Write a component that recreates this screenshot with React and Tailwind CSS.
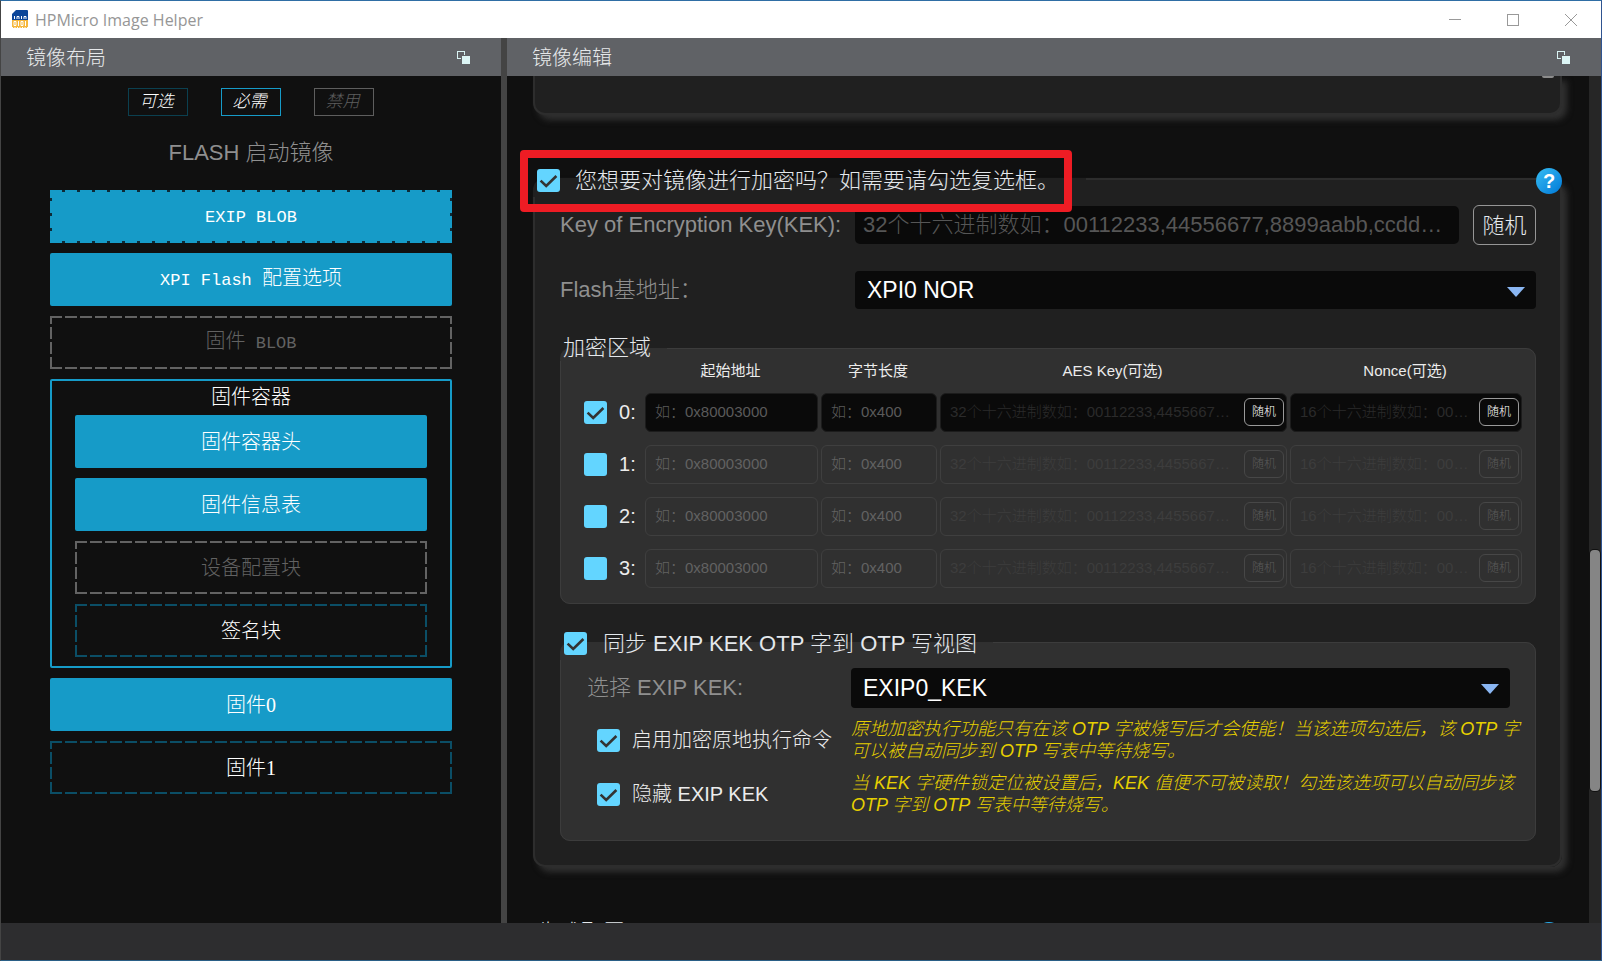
import React from "react";

const DASHED =
  "bg-[image:repeating-linear-gradient(90deg,var(--dash)_0_12px,var(--gap)_12px_15px),repeating-linear-gradient(90deg,var(--dash)_0_12px,var(--gap)_12px_15px),repeating-linear-gradient(0deg,var(--dash)_0_12px,var(--gap)_12px_15px),repeating-linear-gradient(0deg,var(--dash)_0_12px,var(--gap)_12px_15px)] bg-[length:100%_2px,100%_2px,2px_100%,2px_100%] bg-[position:top,bottom,left,right] bg-no-repeat";

const BLOCK_STYLES = {
  dashedFilled: `${DASHED} bg-[#169bc8] text-white [--dash:#169bc8] [--gap:#0e2a36]`,
  filled: "rounded-xs bg-[#169bc8] text-white",
  disabled: `${DASHED} text-[#626262] [--dash:#636363] [--gap:transparent]`,
  optional: `${DASHED} text-white [--dash:#0b4e66] [--gap:transparent]`,
};

function Block({ kind, children }) {
  return (
    <button type="button" className={`h-[53px] w-full text-[20px] leading-6 ${BLOCK_STYLES[kind]}`}>
      {children}
    </button>
  );
}

function Mono({ children }) {
  return <span className="font-['Liberation_Mono',monospace] text-[17px]">{children}</span>;
}

function Digit({ children }) {
  return <span className="font-['Liberation_Serif',serif]">{children}</span>;
}

function DockIcon() {
  return (
    <svg width="13" height="13" viewBox="0 0 13 13" aria-hidden="true">
      <rect x="0.5" y="0.5" width="7" height="7" fill="none" stroke="#d8f3f3" />
      <rect x="4" y="4" width="9" height="9" fill="#606266" />
      <rect x="5" y="5" width="8" height="8" fill="#dcf5f5" />
    </svg>
  );
}

function PanelHeader({ title, className }) {
  return (
    <header className={`flex h-[38px] shrink-0 items-center justify-between bg-[#606266] ${className}`}>
      <h2 className="pt-px text-[20px] leading-6 text-[#e6e8ea]">{title}</h2>
      <button type="button" aria-label="浮动面板">
        <DockIcon />
      </button>
    </header>
  );
}

function CheckBox({ id, label, defaultChecked }) {
  return (
    <span className="grid size-[23px] shrink-0">
      <input
        id={id}
        type="checkbox"
        aria-label={label}
        defaultChecked={defaultChecked}
        className="peer col-start-1 row-start-1 size-[23px] appearance-none rounded-[3px] bg-[#63d5ff]"
      />
      <svg
        viewBox="0 0 23 23"
        className="pointer-events-none invisible col-start-1 row-start-1 size-[23px] peer-checked:visible"
        aria-hidden="true"
      >
        <path d="M3.6 11.6 L9.2 17 L19.4 7" fill="none" stroke="#333" strokeWidth="2.6" />
      </svg>
    </span>
  );
}

function Select({ id, value, className }) {
  return (
    <div className={`relative flex-1 ${className}`}>
      <select
        id={id}
        defaultValue={value}
        className="size-full appearance-none rounded-[4px] bg-[#0a0a0a] pr-10 pl-3 text-[23px] text-white"
      >
        <option>{value}</option>
      </select>
      <svg
        width="18"
        height="10"
        viewBox="0 0 18 10"
        className="pointer-events-none absolute top-4 right-[11px]"
        aria-hidden="true"
      >
        <path d="M0 0 H18 L9 10 Z" fill="#8ab6f2" />
      </svg>
    </div>
  );
}

function HelpButton() {
  return (
    <div className="absolute -top-[29px] -right-[2px]">
      <button
        type="button"
        aria-label="帮助"
        className="flex size-[26px] items-center justify-center rounded-full bg-linear-to-br from-[#35bdf3] to-[#0078d7] text-[20px] leading-none font-bold text-white"
      >
        ?
      </button>
    </div>
  );
}

const CARD =
  "relative mr-[27px] ml-[26px] min-w-0 border-2 border-[#2d2d2d] bg-[#202020] shadow-[5px_5px_6px_#303030]";

function CellField({ row, label, placeholder, active, action }) {
  const frame = active ? "border-[#1c1c1c] bg-[#0a0a0a]" : "border-[#3f3f3f]";
  const button = active ? "border-[#9a9a9a] text-white" : "border-[#474747] text-[#5a5a5a]";
  const hint = action
    ? active
      ? "placeholder:text-[#2b2b2b]"
      : "placeholder:text-[#3d3d3d]"
    : active
      ? "placeholder:text-[#5a5a5a]"
      : "placeholder:text-[#626262]";
  return (
    <div className={`mr-[3px] flex h-[39px] items-center rounded-[6px] border pr-[2px] pl-[9px] ${frame}`}>
      <input
        type="text"
        aria-label={`${label} ${row}`}
        placeholder={placeholder}
        disabled={!active}
        className={`min-w-0 flex-1 text-[15px] text-ellipsis text-white ${hint}`}
      />
      {action && (
        <button
          type="button"
          disabled={!active}
          className={`ml-[9px] h-7 w-10 shrink-0 rounded-[6px] border text-[12px] ${button}`}
        >
          随机
        </button>
      )}
    </div>
  );
}

function RegionTable() {
  return (
    <table className="w-full table-fixed border-collapse">
      <colgroup>
        <col className="w-[71px]" />
        <col className="w-[176px]" />
        <col className="w-[119px]" />
        <col />
        <col className="w-[235px]" />
      </colgroup>
      <thead>
        <tr className="h-[25px] align-top text-[15px] leading-5 text-[#ececec] [&>th]:pr-[5px] [&>th]:font-normal">
          <td />
          <th>起始地址</th>
          <th>字节长度</th>
          <th>AES Key(可选)</th>
          <th>Nonce(可选)</th>
        </tr>
      </thead>
      <tbody>
        {[0, 1, 2, 3].map((n) => {
          const active = n === 0;
          return (
            <tr key={n} className="h-[52px]">
              <td>
                <div className="flex items-center gap-3 pl-[10px]">
                  <CheckBox id={`region-${n}`} defaultChecked={active} />
                  <label htmlFor={`region-${n}`} className="text-[20px] leading-6 text-[#ececec]">
                    {n}:
                  </label>
                </div>
              </td>
              <td>
                <CellField row={n} label="起始地址" placeholder="如：0x80003000" active={active} />
              </td>
              <td>
                <CellField row={n} label="字节长度" placeholder="如：0x400" active={active} />
              </td>
              <td>
                <CellField
                  row={n}
                  label="AES Key"
                  placeholder="32个十六进制数如：00112233,44556677,8899aabb,ccddeeff"
                  active={active}
                  action
                />
              </td>
              <td>
                <CellField
                  row={n}
                  label="Nonce"
                  placeholder="16个十六进制数如：00112233,44556677"
                  active={active}
                  action
                />
              </td>
            </tr>
          );
        })}
      </tbody>
    </table>
  );
}

function OptionRow({ id, label, children }) {
  return (
    <div className="flex h-11 items-center">
      <div className="flex w-[264px] shrink-0 items-center gap-3 pl-[10px]">
        <CheckBox id={id} defaultChecked />
        <label htmlFor={id} className="text-[20px] leading-6 whitespace-nowrap text-[#ececec]">
          {label}
        </label>
      </div>
      <p className="text-[18px] leading-[22px] whitespace-nowrap text-[#e6cf00] italic">{children}</p>
    </div>
  );
}

function AppLogo() {
  return (
    <svg width="17" height="19" viewBox="0 0 17 19" aria-hidden="true">
      <path d="M4 0 H15 Q16 0 16 1 V10 H0 V4 Z" fill="#0b4699" />
      <path d="M0 10 H16 V17 Q16 18 15 18 H1 Q0 18 0 17 Z" fill="#f6b73c" />
      <g fill="none" stroke="#fff" strokeWidth="1">
        <path d="M2.5 6 V9 M5 9 V6.5 H7 V9 M9.5 6 V9 M12 9 V6.5 H14 V9" />
        <path d="M2 11.5 H4 V15.5 H2 Z M6.5 11 V16 M9 11.5 H11 V15.5 H9 Z M13.5 11 V16" />
      </g>
      <path d="M0 17.5 H16" stroke="#fff" strokeDasharray="1 1.5" />
    </svg>
  );
}

function TitleBar() {
  return (
    <div className="flex h-[37px] shrink-0 items-center justify-between bg-white pr-6 pl-[11px]">
      <div className="flex items-center gap-[6px]">
        <AppLogo />
        <h1 className="font-['Open_Sans',sans-serif] text-[16px] leading-6 font-normal text-[#969696]">
          HPMicro Image Helper
        </h1>
      </div>
      <div className="flex items-center gap-[46px]">
        <button type="button" aria-label="最小化">
          <svg width="12" height="12" viewBox="0 0 12 12">
            <path d="M0 5.5 H12" stroke="#999" />
          </svg>
        </button>
        <button type="button" aria-label="最大化">
          <svg width="12" height="12" viewBox="0 0 12 12">
            <rect x="0.5" y="0.5" width="11" height="11" fill="none" stroke="#999" />
          </svg>
        </button>
        <button type="button" aria-label="关闭">
          <svg width="12" height="12" viewBox="0 0 12 12">
            <path d="M0 0 L12 12 M12 0 L0 12" stroke="#999" />
          </svg>
        </button>
      </div>
    </div>
  );
}

function LayoutPanel() {
  return (
    <aside className="flex w-[500px] shrink-0 flex-col">
      <PanelHeader title="镜像布局" className="pr-[31px] pl-[25px]" />
      <div className="px-[49px] pt-3 text-center">
        <ul className="flex justify-center gap-[33px] text-[17px] leading-[26px] italic [&>li]:w-[60px] [&>li]:border [&>li]:pr-[3px]">
          <li className="border-[#0b4050] text-white">可选</li>
          <li className="border-[#169bc8] text-white">必需</li>
          <li className="border-[#5e5e5e] text-[#5e5e5e]">禁用</li>
        </ul>
        <h3 className="py-[22px] text-[22px] leading-[30px] text-[#8f8f8f]">FLASH 启动镜像</h3>
        <div className="flex flex-col gap-[10px]">
          <Block kind="dashedFilled">
            <Mono>EXIP BLOB</Mono>
          </Block>
          <Block kind="filled">
            <Mono>XPI Flash </Mono>配置选项
          </Block>
          <Block kind="disabled">
            固件<Mono> BLOB</Mono>
          </Block>
          <section className="flex flex-col gap-[10px] rounded-xs border-2 border-[#169bc8] px-[23px] pb-[9px]">
            <h4 className="-mb-[10px] h-[34px] pt-1 text-[20px] leading-6 text-white">固件容器</h4>
            <Block kind="filled">固件容器头</Block>
            <Block kind="filled">固件信息表</Block>
            <Block kind="disabled">设备配置块</Block>
            <Block kind="optional">签名块</Block>
          </section>
          <Block kind="filled">
            固件<Digit>0</Digit>
          </Block>
          <Block kind="optional">
            固件<Digit>1</Digit>
          </Block>
        </div>
      </div>
    </aside>
  );
}

function EditorPanel() {
  return (
    <main className="flex min-w-0 flex-1 flex-col">
      <PanelHeader title="镜像编辑" className="pr-[31px] pl-[25px]" />
      <div className="flex min-h-0 flex-1">
        <div className="min-w-0 flex-1 overflow-hidden">
          <section className={`${CARD} mb-[46px] h-[39px] rounded-b-[12px] border-t-0`}>
            <span className="absolute top-0 right-[6px] h-[2px] w-3 rounded-b-full bg-[#8c8c8c]" />
          </section>

          <fieldset className={`${CARD} mb-12 rounded-[12px]`}>
            <legend className="relative -ml-0.5 flex h-9 items-center gap-[15px] pt-[3px] pr-[27px] pl-1">
              <CheckBox id="encrypt" defaultChecked />
              <label htmlFor="encrypt" className="text-[22px] leading-7 text-[#e4e8ec]">
                您想要对镜像进行加密吗？如需要请勾选复选框。
              </label>
              <span className="pointer-events-none absolute -top-[11px] right-[14px] -bottom-[15px] -left-[13px] z-10 rounded-[4px] border-8 border-[#ee1c24]" />
            </legend>
            <HelpButton />
            <div className="flex flex-col pt-2 pr-6 pb-6 pl-[25px]">
              <div className="mb-[26px] flex h-10 items-center">
                <label htmlFor="kek" className="w-[295px] shrink-0 text-[22px] leading-7 whitespace-nowrap text-[#8f8f8f]">
                  Key of Encryption Key(KEK):
                </label>
                <input
                  id="kek"
                  type="text"
                  placeholder="32个十六进制数如：00112233,44556677,8899aabb,ccddeeff"
                  className="h-[38px] min-w-0 flex-1 rounded-[5px] bg-[#0a0a0a] pr-[5px] pl-2 text-[22px] text-ellipsis text-white placeholder:text-[#565656]"
                />
                <button
                  type="button"
                  className="ml-[14px] h-10 w-[63px] shrink-0 rounded-[6px] border border-[#969696] text-[22px] text-[#e4e8ec]"
                >
                  随机
                </button>
              </div>

              <div className="mb-[26px] flex items-center">
                <label htmlFor="flash-base" className="w-[295px] shrink-0 text-[22px] leading-7 text-[#8f8f8f]">
                  Flash基地址：
                </label>
                <Select id="flash-base" value="XPI0 NOR" className="h-[38px]" />
              </div>

              <fieldset className="mb-5 min-w-0 rounded-[10px] border border-[#3c3c3c] bg-[#303030]">
                <legend className="-ml-px h-[26px] pr-4 pl-[3px] text-[22px] leading-[26px] text-[#e4e8ec]">
                  加密区域
                </legend>
                <div className="pr-[10px] pb-[9px] pl-[13px]">
                  <RegionTable />
                </div>
              </fieldset>

              <fieldset className="min-w-0 rounded-[10px] border border-[#3c3c3c] bg-[#303030]">
                <legend className="-ml-px flex h-9 items-center gap-4 pt-[3px] pr-4 pl-1">
                  <CheckBox id="sync-otp" defaultChecked />
                  <label htmlFor="sync-otp" className="text-[22px] leading-7 text-[#e4e8ec]">
                    同步 EXIP KEK OTP 字到 OTP 写视图
                  </label>
                </legend>
                <div className="flex flex-col gap-[10px] pt-2 pr-[25px] pb-6 pl-[26px]">
                  <div className="flex items-center">
                    <label htmlFor="exip-kek" className="w-[264px] shrink-0 text-[22px] leading-7 text-[#8f8f8f]">
                      选择 EXIP KEK:
                    </label>
                    <Select id="exip-kek" value="EXIP0_KEK" className="h-10" />
                  </div>
                  <OptionRow id="enable-exip" label="启用加密原地执行命令">
                    原地加密执行功能只有在该 OTP 字被烧写后才会使能！当该选项勾选后，该 OTP 字
                    <br />
                    可以被自动同步到 OTP 写表中等待烧写。
                  </OptionRow>
                  <OptionRow id="hide-kek" label="隐藏 EXIP KEK">
                    当 KEK 字硬件锁定位被设置后，KEK 值便不可被读取！勾选该选项可以自动同步该
                    <br />
                    OTP 字到 OTP 写表中等待烧写。
                  </OptionRow>
                </div>
              </fieldset>
            </div>
          </fieldset>

          <fieldset className={`${CARD} h-20 rounded-[12px]`}>
            <legend className="-ml-0.5 h-9 pr-4 pl-1 text-[22px] leading-9 text-[#e4e8ec]">生成配置</legend>
            <HelpButton />
          </fieldset>
        </div>

        <div className="flex w-3 shrink-0 flex-col bg-[#262626]">
          <div className="grow-[474]" />
          <div className="mx-px grow-[241] rounded-[4px] bg-[#858585] ring-1 ring-[#111]" />
          <div className="grow-[132]" />
        </div>
      </div>
    </main>
  );
}

export default function App() {
  return (
    <div className="flex h-screen flex-col overflow-hidden border border-t-[#2f6ea5] border-r-[#2f5490] border-b-[#2a5f86] border-l-[#444] bg-[#101010] font-['Liberation_Sans','Noto_Sans_CJK_SC',sans-serif] font-light">
      <TitleBar />
      <div className="flex min-h-0 flex-1">
        <LayoutPanel />
        <div className="w-[6px] shrink-0 bg-[#444]" />
        <EditorPanel />
      </div>
      <footer className="h-[37px] shrink-0 bg-[#2d2d2f]" />
    </div>
  );
}
